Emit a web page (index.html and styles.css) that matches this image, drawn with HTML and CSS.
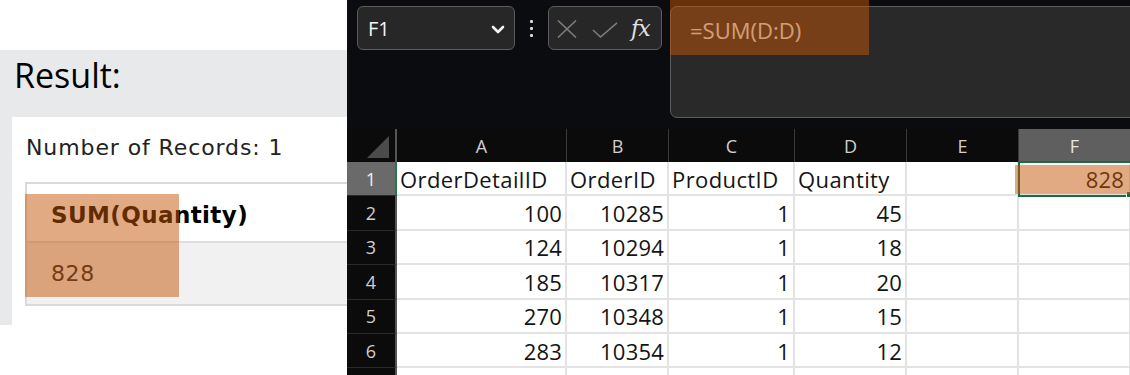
FILE: index.html
```html
<!DOCTYPE html>
<html>
<head>
<meta charset="utf-8">
<link rel="stylesheet" href="styles.css">
</head>
<body>
<div class="page">
  <section class="result">
    <div class="result-panel">
      <h2 class="result-title">Result:</h2>
      <div class="result-box">
        <div class="records">Number of Records: 1</div>
        <table class="result-table">
          <tr><th>SUM(Quantity)</th></tr>
          <tr><td>828</td></tr>
        </table>
      </div>
    </div>
  </section>

  <section class="excel">
    <div class="formula-row">
      <div class="namebox">
        <span class="namebox-text">F1</span>
        <svg class="chev" width="14" height="9" viewBox="0 0 14 9"><path d="M2 2 L7 7 L12 2" fill="none" stroke="#f2f2f2" stroke-width="2.6" stroke-linecap="round" stroke-linejoin="round"/></svg>
      </div>
      <div class="kebab"><i></i><i></i><i></i></div>
      <div class="fx-box">
        <svg class="ico-x" width="20" height="18" viewBox="0 0 20 18"><path d="M1 0.5 L19 17.5 M19 0.5 L1 17.5" stroke="#7c7c7c" stroke-width="1.6" fill="none"/></svg>
        <svg class="ico-check" width="26" height="16" viewBox="0 0 26 16"><path d="M1 8 L8.5 15 L25 0.8" stroke="#7c7c7c" stroke-width="1.6" fill="none"/></svg>
        <span class="fx">fx</span>
      </div>
      <div class="formula-bar">=SUM(D:D)</div>
    </div>

    <div class="sheet">
      <div class="corner"><svg width="24" height="23" viewBox="0 0 24 23"><path d="M23 0 L23 22 L1 22 Z" fill="#4b4b4b"/></svg></div>
      <div class="ch">A</div><div class="ch">B</div><div class="ch">C</div><div class="ch">D</div><div class="ch">E</div><div class="ch sel">F</div>

      <div class="rh sel">1</div>
      <div class="c">OrderDetailID</div><div class="c">OrderID</div><div class="c">ProductID</div><div class="c">Quantity</div><div class="c"></div><div class="c num active">828<span class="handle"></span></div>

      <div class="rh">2</div>
      <div class="c num">100</div><div class="c num">10285</div><div class="c num">1</div><div class="c num">45</div><div class="c"></div><div class="c"></div>

      <div class="rh">3</div>
      <div class="c num">124</div><div class="c num">10294</div><div class="c num">1</div><div class="c num">18</div><div class="c"></div><div class="c"></div>

      <div class="rh">4</div>
      <div class="c num">185</div><div class="c num">10317</div><div class="c num">1</div><div class="c num">20</div><div class="c"></div><div class="c"></div>

      <div class="rh">5</div>
      <div class="c num">270</div><div class="c num">10348</div><div class="c num">1</div><div class="c num">15</div><div class="c"></div><div class="c"></div>

      <div class="rh">6</div>
      <div class="c num">283</div><div class="c num">10354</div><div class="c num">1</div><div class="c num">12</div><div class="c"></div><div class="c"></div>

      <div class="rh"></div>
      <div class="c"></div><div class="c"></div><div class="c"></div><div class="c"></div><div class="c"></div><div class="c"></div>
    </div>
  </section>

  <div class="hl hl-result"></div>
  <div class="hl hl-formula"></div>
  <div class="hl hl-cell"></div>
</div>
</body>
</html>
```

FILE: styles.css
```css
html, body {
  margin: 0;
  padding: 0;
  background: #ffffff;
}

.page {
  position: relative;
  display: flex;
  width: 1130px;
  height: 375px;
  overflow: hidden;
  background: #ffffff;
}

/* ---------- Left: query result ---------- */
.result {
  flex: none;
  width: 347px;
  overflow: hidden;
  padding-top: 50px;
  box-sizing: border-box;
  background: #ffffff;
}

.result-panel {
  width: 500px;
  height: 275px;
  background: #e7e9eb;
  padding-left: 12px;
  box-sizing: border-box;
  display: flex;
  flex-direction: column;
}

.result-title {
  margin: 2px 0 19px 2px;
  font-family: "Open Sans", sans-serif;
  font-weight: 400;
  font-size: 34px;
  line-height: 46px;
  color: #000;
}

.result-box {
  flex: 1;
  background: #ffffff;
  padding: 18px 0 0 13px;
}

.records {
  padding-left: 1px;
  font-family: "DejaVu Sans", Verdana, sans-serif;
  font-size: 22px;
  line-height: 26px;
  letter-spacing: 0.9px;
  color: #222;
}

.result-table {
  margin-top: 21px;
  width: 420px;
  border: 2px solid #dadada;
  border-collapse: separate;
  border-spacing: 0;
  font-family: "DejaVu Sans", Verdana, sans-serif;
  color: #000;
}

.result-table th {
  text-align: left;
  font-weight: 700;
  font-size: 23px;
  line-height: 27px;
  letter-spacing: 0.4px;
  padding: 18px 0 12px 24px;
  border-bottom: 2px solid #dedede;
  background: #ffffff;
}

.result-table td {
  font-size: 22px;
  line-height: 26px;
  letter-spacing: 0.6px;
  padding: 18px 0 17px 24px;
  background: #f1f1f1;
  color: #222;
}

/* ---------- Right: Excel ---------- */
.excel {
  flex: 1;
  min-width: 0;
  background: #0b0c10;
  overflow: hidden;
  display: flex;
  flex-direction: column;
}

.formula-row {
  flex: none;
  height: 129px;
  box-sizing: border-box;
  padding: 6px 0 0 10px;
  display: flex;
  align-items: flex-start;
}

.namebox {
  flex: none;
  width: 158px;
  height: 44px;
  box-sizing: border-box;
  border: 1.5px solid #5c5c5c;
  border-radius: 6px;
  background: #272727;
  display: flex;
  align-items: center;
  justify-content: space-between;
  padding: 0 9px 0 10px;
}

.namebox-text {
  font-family: "Open Sans", sans-serif;
  font-size: 20px;
  color: #f4f4f4;
}

.chev {
  margin-top: 2px;
}

.kebab {
  flex: none;
  width: 33px;
  height: 44px;
  display: flex;
  flex-direction: column;
  align-items: center;
  justify-content: center;
  gap: 4px;
}

.kebab i {
  display: block;
  width: 3px;
  height: 3px;
  border-radius: 1px;
  background: #d8d8d8;
}

.fx-box {
  flex: none;
  width: 114px;
  height: 44px;
  box-sizing: border-box;
  border: 1.5px solid #5c5c5c;
  border-radius: 6px;
  background: #272727;
  display: flex;
  align-items: center;
  padding-left: 8px;
}

.ico-x {
  flex: none;
  margin-top: 2px;
}

.ico-check {
  flex: none;
  margin-left: 15px;
  margin-top: 3px;
}

.fx {
  margin-left: 13px;
  font-family: "DejaVu Serif", serif;
  font-style: italic;
  font-weight: 400;
  font-size: 22px;
  color: #e2e2e2;
  letter-spacing: -1px;
}

.formula-bar {
  flex: none;
  margin-left: 8px;
  width: 480px;
  height: 112px;
  box-sizing: border-box;
  border: 1.5px solid #5c5c5c;
  border-radius: 7px;
  background: #292929;
  padding: 8px 0 0 19px;
  font-family: "Open Sans", sans-serif;
  font-size: 22px;
  line-height: 30px;
  color: #e4e4e4;
}

.sheet {
  display: grid;
  grid-template-columns: 50px 170px 102px 126px 112px 112px 112px;
  grid-template-rows: 33px repeat(7, 34.4px);
}

.corner {
  background: #0b0b0b;
  border-right: 2px solid #555;
  display: flex;
  align-items: flex-end;
  justify-content: flex-end;
  padding: 0 5px 3px 0;
  box-sizing: border-box;
}

.ch {
  background: #0b0b0b;
  border-right: 1px solid #3a3a3a;
  color: #d0d0d0;
  font-family: "Open Sans", sans-serif;
  font-size: 18px;
  display: flex;
  align-items: center;
  justify-content: center;
  box-sizing: border-box;
}

.ch.sel {
  background: #5f5f5f;
  color: #e6e6e6;
}

.rh {
  background: #0b0b0b;
  border-right: 2px solid #555;
  border-bottom: 1px solid #2a2a2a;
  color: #d0d0d0;
  font-family: "Open Sans", sans-serif;
  font-size: 18px;
  display: flex;
  align-items: center;
  justify-content: center;
  box-sizing: border-box;
}

.rh.sel {
  background: #6a6a6a;
  border-right-color: #1f7a45;
  color: #f0f0f0;
}

.c {
  background: #ffffff;
  border-right: 2px solid #e3e3e3;
  border-bottom: 2px solid #e3e3e3;
  box-sizing: border-box;
  display: flex;
  align-items: center;
  padding: 1px 3px 0 3px;
  font-family: "Open Sans", sans-serif;
  font-size: 22px;
  letter-spacing: 0.4px;
  color: #141414;
  white-space: nowrap;
  overflow: hidden;
}

.c.num {
  justify-content: flex-end;
  letter-spacing: 0.2px;
}

.c.active {
  position: relative;
  overflow: visible;
  outline: 2px solid #1d6b3c;
  outline-offset: -1px;
  padding-right: 5px;
}

.handle {
  position: absolute;
  right: -4px;
  bottom: -4px;
  width: 5px;
  height: 5px;
  background: #1d6b3c;
  border: 1px solid #ffffff;
}

/* ---------- highlight overlays ---------- */
.hl {
  position: absolute;
  background: rgba(195, 85, 5, 0.5);
  pointer-events: none;
}

.hl-result {
  left: 25px;
  top: 194px;
  width: 154px;
  height: 103px;
}

.hl-formula {
  left: 670px;
  top: 0;
  width: 199px;
  height: 55px;
}

.hl-cell {
  left: 1015px;
  top: 165px;
  width: 115px;
  height: 29px;
}
```
